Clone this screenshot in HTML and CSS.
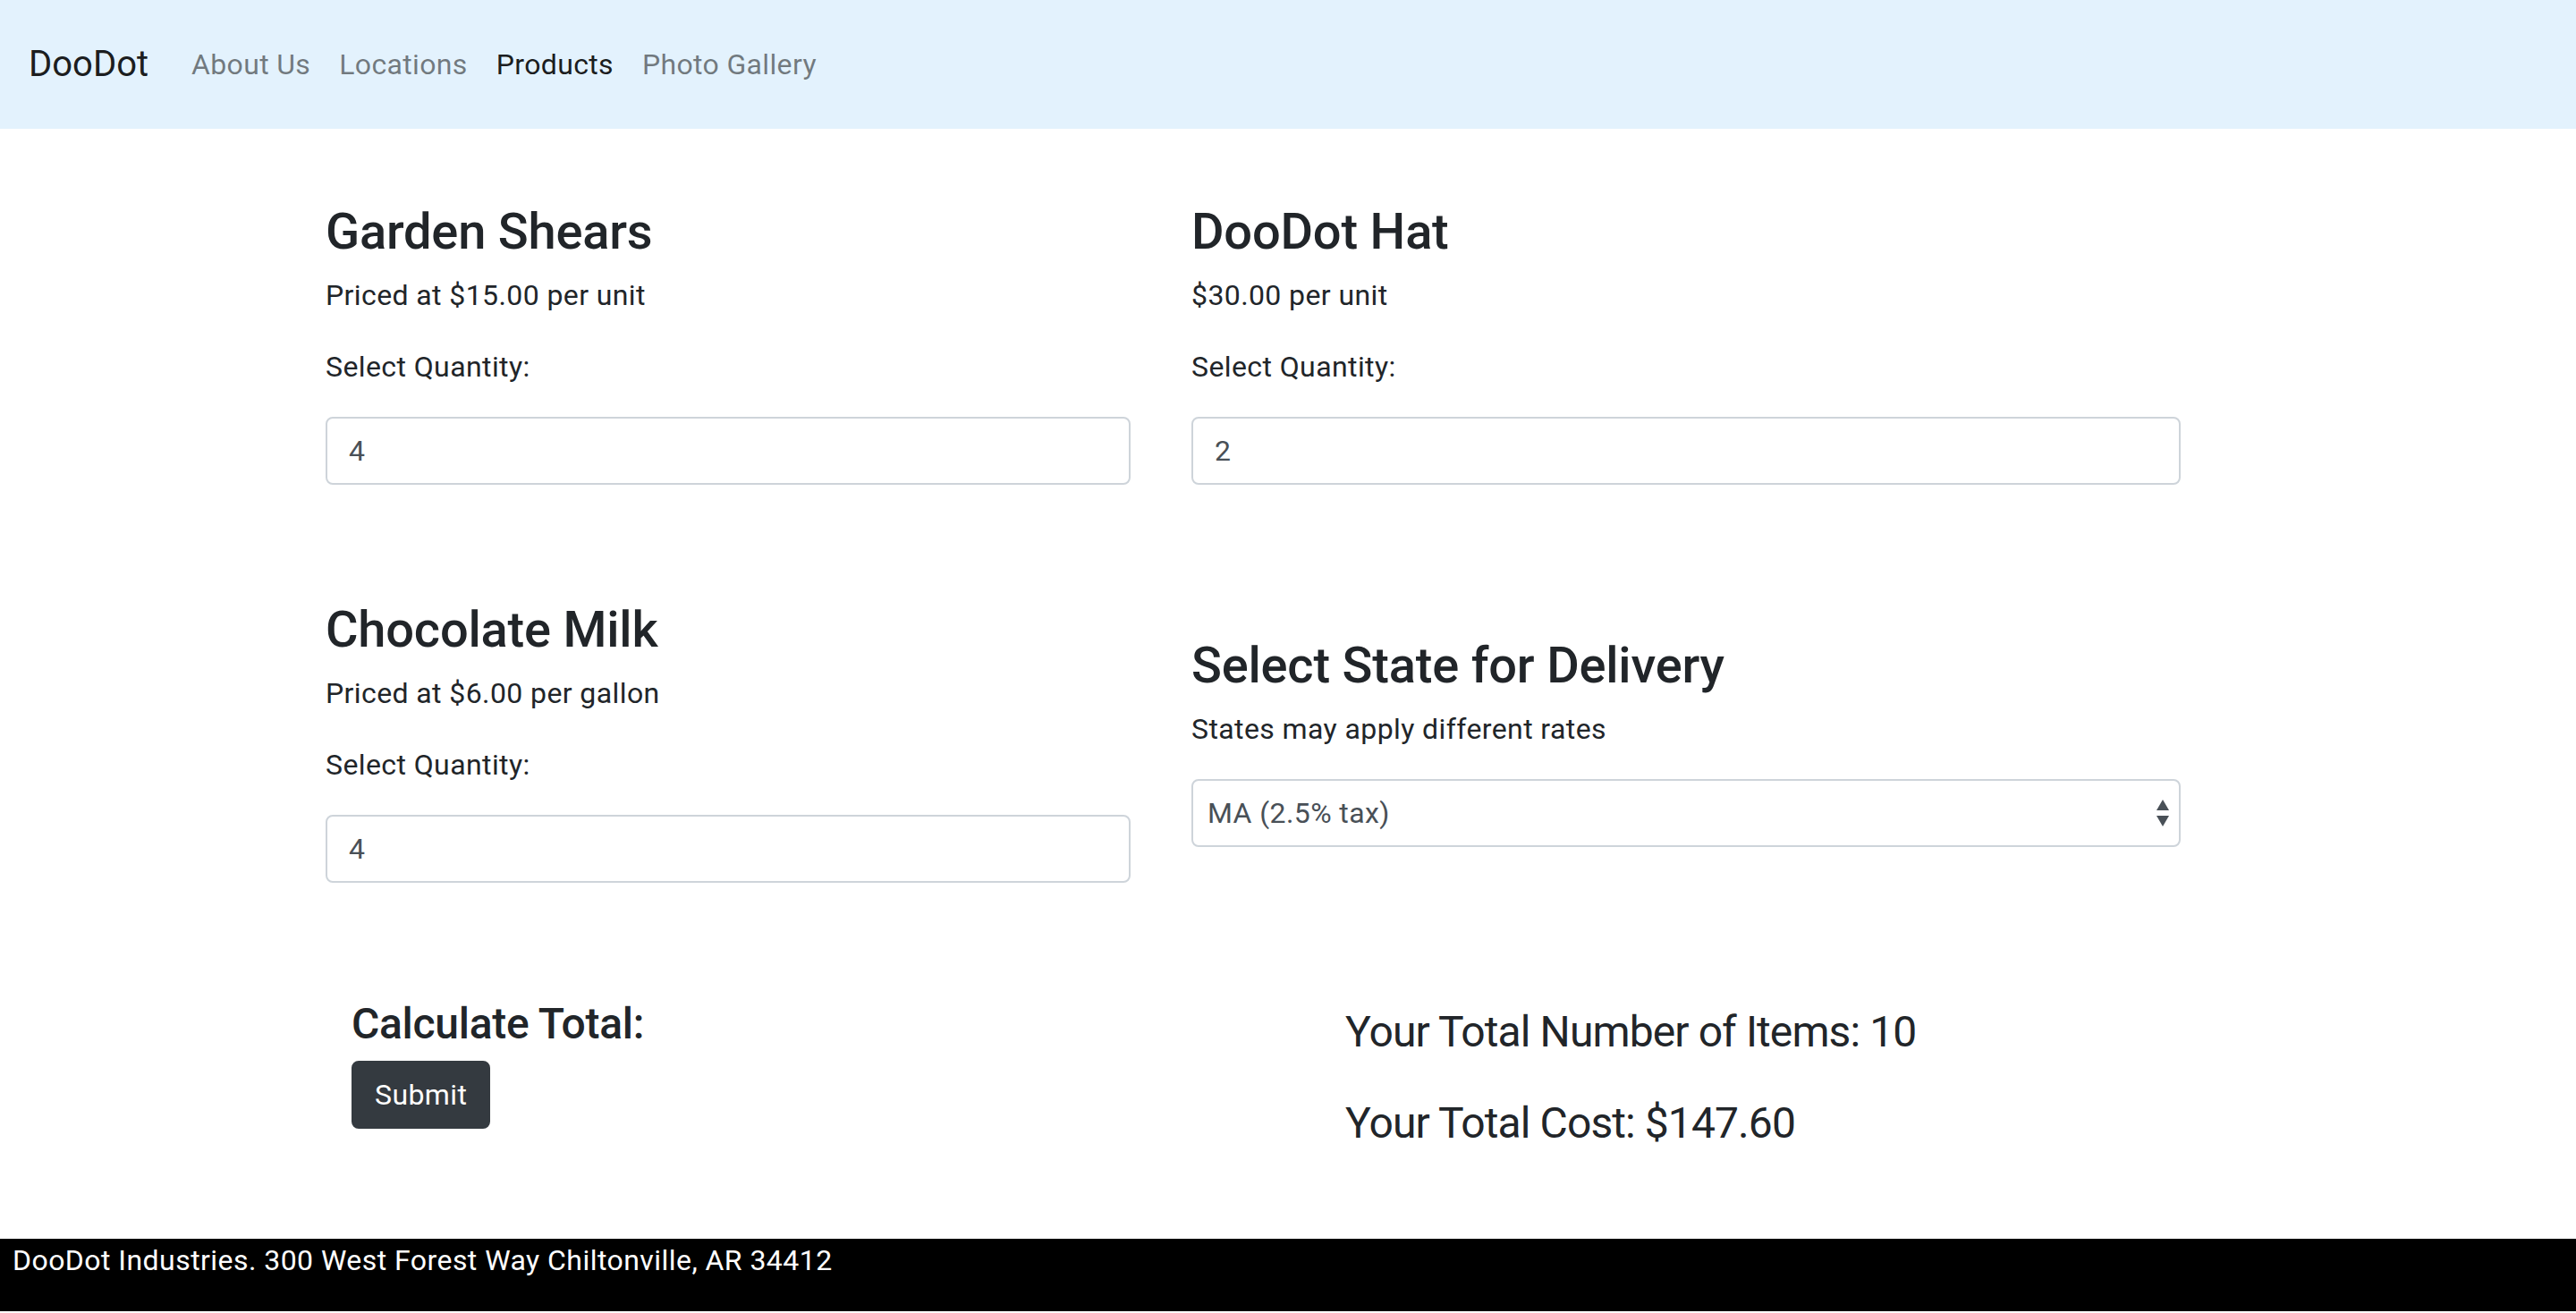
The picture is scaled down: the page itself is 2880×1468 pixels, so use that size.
FILE: index.html
```html
<!DOCTYPE html>
<html lang="en">
<head>
<meta charset="utf-8">
<title>DooDot - Products</title>
<link rel="stylesheet" href="styles.css">
</head>
<body>
<nav class="navbar">
  <a class="brand" href="#">DooDot</a>
  <ul class="nav-links">
    <li><a class="nav-link" href="#">About Us</a></li>
    <li><a class="nav-link" href="#">Locations</a></li>
    <li><a class="nav-link active" href="#">Products</a></li>
    <li><a class="nav-link" href="#">Photo Gallery</a></li>
  </ul>
</nav>

<main class="page">
  <section class="product-grid">
    <div class="product">
      <h3 class="product-title">Garden Shears</h3>
      <p class="text">Priced at $15.00 per unit</p>
      <label class="text label" for="q1">Select Quantity:</label>
      <input class="field" id="q1" type="number" value="4">
    </div>
    <div class="product">
      <h3 class="product-title">DooDot Hat</h3>
      <p class="text">$30.00 per unit</p>
      <label class="text label" for="q2">Select Quantity:</label>
      <input class="field" id="q2" type="number" value="2">
    </div>
    <div class="product">
      <h3 class="product-title">Chocolate Milk</h3>
      <p class="text">Priced at $6.00 per gallon</p>
      <label class="text label" for="q3">Select Quantity:</label>
      <input class="field" id="q3" type="number" value="4">
    </div>
    <div class="product">
      <h3 class="product-title">Select State for Delivery</h3>
      <p class="text">States may apply different rates</p>
      <div class="field select-field">
        <span class="select-value">MA (2.5% tax)</span>
        <svg class="select-arrows" width="16" height="32" viewBox="0 0 16 32" aria-hidden="true">
          <path d="M8 1 L15 13 L1 13 Z" fill="#495057"/>
          <path d="M1 19 L15 19 L8 31 Z" fill="#495057"/>
        </svg>
      </div>
    </div>
  </section>

  <section class="totals">
    <div class="calc">
      <h4 class="calc-title">Calculate Total:</h4>
      <button class="btn-dark" type="button">Submit</button>
    </div>
    <div class="results">
      <p class="result">Your Total Number of Items: 10</p>
      <p class="result">Your Total Cost: $147.60</p>
    </div>
  </section>
</main>

<footer class="footer">DooDot Industries. 300 West Forest Way Chiltonville, AR 34412</footer>
</body>
</html>
```

FILE: styles.css
```css
* {
  box-sizing: border-box;
}

html, body {
  margin: 0;
  padding: 0;
}

body {
  font-family: Roboto, "Liberation Sans", Arial, sans-serif;
  font-size: 32px;
  line-height: 1.5;
  letter-spacing: 0.4px;
  color: #212529;
  background: #fff;
}

/* Navbar */
.navbar {
  height: 144px;
  background: #e3f2fd;
  display: flex;
  align-items: center;
  padding: 0 32px;
}

.brand {
  font-size: 40px;
  line-height: 60px;
  letter-spacing: 0;
  color: rgba(0, 0, 0, 0.9);
  text-decoration: none;
  margin-right: 32px;
}

.nav-links {
  list-style: none;
  margin: 0;
  padding: 0;
  display: flex;
}

.nav-link {
  display: block;
  padding: 16px 16px;
  font-size: 32px;
  line-height: 48px;
  letter-spacing: 0.35px;
  color: rgba(0, 0, 0, 0.5);
  text-decoration: none;
}

.nav-link.active {
  color: rgba(0, 0, 0, 0.9);
}

/* Page */
.page {
  padding-top: 79px;
}

.product-grid {
  display: grid;
  grid-template-columns: 900px 1106px;
  column-gap: 68px;
  row-gap: 126px;
  align-items: center;
  margin-left: 364px;
}

.product {
  display: flex;
  flex-direction: column;
}

.product-title {
  margin: 0 0 13px;
  padding-top: 3px;
  font-size: 56px;
  font-weight: 500;
  line-height: 1.2;
  letter-spacing: -0.2px;
}

.text {
  margin: 0 0 32px;
  font-size: 32px;
  line-height: 48px;
}

.label {
  display: block;
}

.field {
  display: block;
  width: 100%;
  height: 76px;
  padding: 12px 24px;
  font-family: inherit;
  font-size: 32px;
  line-height: 48px;
  letter-spacing: 0.4px;
  color: #495057;
  background: #fff;
  border: 2px solid #ced4da;
  border-radius: 8px;
}

.select-field {
  display: flex;
  align-items: center;
  justify-content: space-between;
  padding: 12px 10px 12px 16px;
}

.select-arrows {
  flex: none;
}

/* Totals */
.totals {
  display: grid;
  grid-template-columns: 1111px auto;
  margin: 129px 0 0 393px;
  align-items: start;
}

.calc-title {
  margin: 0 0 12px;
  font-size: 48px;
  font-weight: 500;
  line-height: 1.2;
  letter-spacing: -0.3px;
}

.btn-dark {
  display: inline-block;
  height: 76px;
  padding: 12px 24px;
  font-family: inherit;
  font-size: 32px;
  line-height: 48px;
  letter-spacing: 0.4px;
  color: #fff;
  background: #343a40;
  border: 2px solid #343a40;
  border-radius: 8px;
}

.results {
  margin-top: 2px;
}

.result {
  margin: 0 0 30px;
  font-size: 48px;
  line-height: 72px;
  letter-spacing: -0.9px;
}

.result:last-child {
  margin-bottom: 0;
}

/* Footer */
.footer {
  margin-top: 93px;
  background: #000;
  color: #fff;
  font-size: 32px;
  line-height: 48px;
  letter-spacing: 0.45px;
  padding: 0 14px 33px;
}
```
